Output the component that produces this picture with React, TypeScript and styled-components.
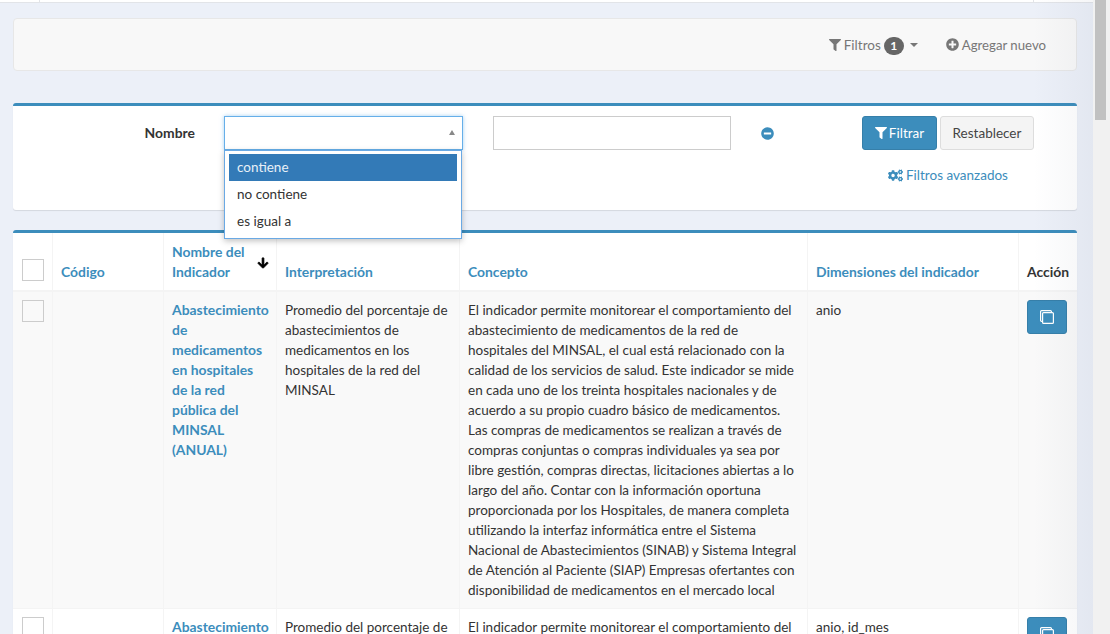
import React from 'react';
import styled, { createGlobalStyle } from 'styled-components';
import { FaFilter, FaPlusCircle, FaCogs, FaMinusCircle, FaArrowDown } from 'react-icons/fa';

const Global = createGlobalStyle`
  html, body { margin: 0; padding: 0; height: 100%; overflow: hidden; }
  body { font-family: "Lato", "Liberation Sans", sans-serif; font-size: 13.5px; line-height: 20px; color: #333; }
  * { box-sizing: border-box; }
`;

const Viewport = styled.div`display: flex; width: 1110px; height: 634px; overflow: hidden; background: #ecf0f8;`;
const Main = styled.main`position: relative; width: 1093px; height: 634px; overflow: hidden; display: flex; flex-direction: column; flex: none;
  &::after { content: ""; position: absolute; top: 0; right: 0; bottom: 0; width: 60px; pointer-events: none; z-index: 9;
    background: linear-gradient(to right, rgba(60,70,100,0), rgba(60,70,100,.05)); }
`;
const TopBar = styled.div`height: 3px; flex: none; background: #fff; border-bottom: 1px solid #e2e4e8; padding-left: 39px; display: flex; gap: 993px;
  & > i { display: block; width: 1px; height: 2px; background: #e2e4e8; }
`;
const Content = styled.div`padding: 15px 16px 0 13px; display: flex; flex-direction: column; flex: none;`;
const Navbar = styled.nav`height: 53px; background: #f8f8f8; border: 1px solid #e7e7e7; border-radius: 4px; display: flex; justify-content: flex-end; align-items: center; padding-right: 30px; gap: 28px; color: #777; margin-bottom: 32px;`;
const NavItem = styled.span`display: inline-flex; align-items: center; gap: 3px; & svg { flex: none; }`;
const AddItem = styled(NavItem)`font-size: 13.2px;`;
const Badge = styled.span`display: inline-block; width: 20px; height: 18px; border-radius: 10px; background: #666; color: #fff; font-size: 12px; font-weight: 700; line-height: 18px; text-align: center; margin-top: 2px;`;
const Caret = styled.span`display: inline-block; margin-left: 3px; border-top: 4px solid #777; border-left: 4px solid transparent; border-right: 4px solid transparent;`;

const Box = styled.section`background: #fff; border-top: 3px solid #3c8dbc; border-radius: 3px; box-shadow: 0 1px 1px rgba(0,0,0,.1);`;
const FilterBox = styled(Box)`height: 107px; margin-bottom: 20px; padding-top: 10px; position: relative;`;
const FilterGrid = styled.div`display: grid; grid-template-columns: 182px 298px 269px 100px 75px 97px; align-items: center;`;
const Label = styled.label`font-weight: 700; font-size: 13.9px; text-align: right;`;
const SelectWrap = styled.div`position: relative; margin-left: 29px; width: 239px;`;
const SelectBox = styled.div`height: 34px; border: 1px solid #66afe9; box-shadow: 0 0 4px rgba(102,175,233,.6); background: #fff; position: relative;
  &::after { content: ""; position: absolute; right: 7px; top: 13px; border-bottom: 5px solid #888; border-left: 3.5px solid transparent; border-right: 3.5px solid transparent; }
`;
const Dropdown = styled.ul`position: absolute; z-index: 5; left: 0; top: 34px; width: 238px; height: 89px; margin: 0; padding: 3px 4px; list-style: none; background: #fff; border: 1px solid #6aa9e4; box-shadow: 0 2px 6px rgba(0,0,0,.25);`;
const Option = styled.li<{ $active?: boolean }>`height: 27px; line-height: 26px; padding-left: 8px; background: ${p => p.$active ? '#337ab7' : 'transparent'}; color: ${p => p.$active ? '#e8f0f8' : '#333'};`;
const TextInput = styled.div`height: 34px; width: 238px; border: 1px solid #ccc; background: #fff;`;
const Remove = styled.div`margin-left: -1px; color: #3c8dbc; display: flex; align-items: center;`;
const Btn = styled.button<{ $primary?: boolean }>`height: 34px; padding: 0; font: inherit; border-radius: 3px; display: inline-flex; align-items: center; justify-content: center; gap: 2px;
  background: ${p => p.$primary ? '#3c8dbc' : '#f4f4f4'}; color: ${p => p.$primary ? '#fff' : '#444'}; border: 1px solid ${p => p.$primary ? '#367fa9' : '#ddd'};`;
const ResetBtn = styled(Btn)`width: 94px; margin-left: 3px;`;
const Advanced = styled.a`position: absolute; top: 59px; left: 875px; color: #3c8dbc; display: inline-flex; align-items: center; gap: 3px;`;

const TableBox = styled(Box)`flex: none;`;
const Table = styled.table`width: 1064px; table-layout: fixed; border-collapse: collapse;`;
const Th = styled.th<{ $plain?: boolean }>`text-align: left; vertical-align: bottom; padding: 8px 7px 8px 8.5px; height: 58px; font-weight: 700; font-size: 13.9px; color: ${p => p.$plain ? '#333' : '#3c8dbc'}; border-left: 1px solid #f4f4f4; border-bottom: 2px solid #f4f4f4; position: relative; &:first-child { border-left: 0; }`;
const Tr = styled.tr<{ $odd?: boolean }>`background: ${p => p.$odd ? '#f9f9f9' : '#fff'};`;
const Td = styled.td`vertical-align: top; padding: 8px 7px 8px 8.5px; border-left: 1px solid #f4f4f4; border-bottom: 1px solid #f4f4f4; &:first-child { border-left: 0; }`;
const Line = styled.span`display: block; white-space: nowrap;`;
const NameLink = styled.a`display: block; color: #3c8dbc; font-weight: 700; font-size: 13.9px;`;
const Check = styled.span<{ $head?: boolean }>`display: block; width: 22px; height: 22px; border: 1px solid #ccc; background: ${p => p.$head ? '#fff' : 'transparent'}; margin-bottom: ${p => p.$head ? '1px' : '0'};`;
const SortIcon = styled.span`position: absolute; right: 7px; top: 24px; color: #000; line-height: 0;`;
const CopyBtn = styled.span`display: flex; align-items: center; justify-content: center; width: 40px; height: 34px; margin-left: -0.5px; background: #3c8dbc; border: 1px solid #367fa9; border-radius: 3px;`;

const Scrollbar = styled.aside`width: 17px; flex: none; background: #f1f1f1; padding: 0 4px 0 2px;`;
const Thumb = styled.div`height: 120px; background: #c1c1c1;`;

const Lines = ({ items }: { items: string[] }) => <>{items.map((l, i) => <Line key={i}>{l}</Line>)}</>;
const CopyIcon = () => (
  <svg width="16" height="16" viewBox="0 0 16 16" fill="none" stroke="#fff" strokeWidth="1.2">
    <rect x="3.6" y="3.6" width="10.8" height="10.8" rx="1" />
    <path d="M3.6 12.4h-1a1 1 0 0 1-1-1V2.6a1 1 0 0 1 1-1h8.8a1 1 0 0 1 1 1v1" />
  </svg>
);

const name = ['Abastecimiento', 'de', 'medicamentos', 'en hospitales', 'de la red', 'pública del', 'MINSAL', '(ANUAL)'];
const interp = ['Promedio del porcentaje de', 'abastecimientos de', 'medicamentos en los', 'hospitales de la red del', 'MINSAL'];
const concept = [
  'El indicador permite monitorear el comportamiento del',
  'abastecimiento de medicamentos de la red de',
  'hospitales del MINSAL, el cual está relacionado con la',
  'calidad de los servicios de salud. Este indicador se mide',
  'en cada uno de los treinta hospitales nacionales y de',
  'acuerdo a su propio cuadro básico de medicamentos.',
  'Las compras de medicamentos se realizan a través de',
  'compras conjuntas o compras individuales ya sea por',
  'libre gestión, compras directas, licitaciones abiertas a lo',
  'largo del año. Contar con la información oportuna',
  'proporcionada por los Hospitales, de manera completa',
  'utilizando la interfaz informática entre el Sistema',
  'Nacional de Abastecimientos (SINAB) y Sistema Integral',
  'de Atención al Paciente (SIAP) Empresas ofertantes con',
  'disponibilidad de medicamentos en el mercado local',
];

const Row = ({ odd, dims }: { odd?: boolean; dims: string }) => (
  <Tr $odd={odd}>
    <Td><Check /></Td>
    <Td />
    <Td><NameLink><Lines items={name} /></NameLink></Td>
    <Td><Lines items={interp} /></Td>
    <Td><Lines items={concept} /></Td>
    <Td>{dims}</Td>
    <Td><CopyBtn><CopyIcon /></CopyBtn></Td>
  </Tr>
);

export default function App() {
  return (
    <Viewport>
      <Global />
      <Main>
        <TopBar><i /><i /></TopBar>
        <Content>
          <Navbar>
            <NavItem><FaFilter size={12} />Filtros <Badge>1</Badge><Caret /></NavItem>
            <AddItem><FaPlusCircle size={13} />Agregar nuevo</AddItem>
          </Navbar>
          <FilterBox>
            <FilterGrid>
              <Label>Nombre</Label>
              <SelectWrap>
                <SelectBox />
                <Dropdown>
                  <Option $active>contiene</Option>
                  <Option>no contiene</Option>
                  <Option>es igual a</Option>
                </Dropdown>
              </SelectWrap>
              <TextInput />
              <Remove><FaMinusCircle size={13} /></Remove>
              <Btn $primary><FaFilter size={12} />Filtrar</Btn>
              <ResetBtn>Restablecer</ResetBtn>
            </FilterGrid>
            <Advanced><FaCogs size={15} />Filtros avanzados</Advanced>
          </FilterBox>
          <TableBox>
            <Table>
              <colgroup>
                <col width="39" /><col width="111" /><col width="113" /><col width="183" /><col width="348" /><col width="211" /><col width="59" />
              </colgroup>
              <thead>
                <tr>
                  <Th><Check $head /></Th>
                  <Th>Código</Th>
                  <Th>Nombre del<br />Indicador<SortIcon><FaArrowDown size={12} stroke="#000" strokeWidth={30} /></SortIcon></Th>
                  <Th>Interpretación</Th>
                  <Th>Concepto</Th>
                  <Th>Dimensiones del indicador</Th>
                  <Th $plain>Acción</Th>
                </tr>
              </thead>
              <tbody>
                <Row odd dims="anio" />
                <Row dims="anio, id_mes" />
              </tbody>
            </Table>
          </TableBox>
        </Content>
      </Main>
      <Scrollbar><Thumb /></Scrollbar>
    </Viewport>
  );
}
